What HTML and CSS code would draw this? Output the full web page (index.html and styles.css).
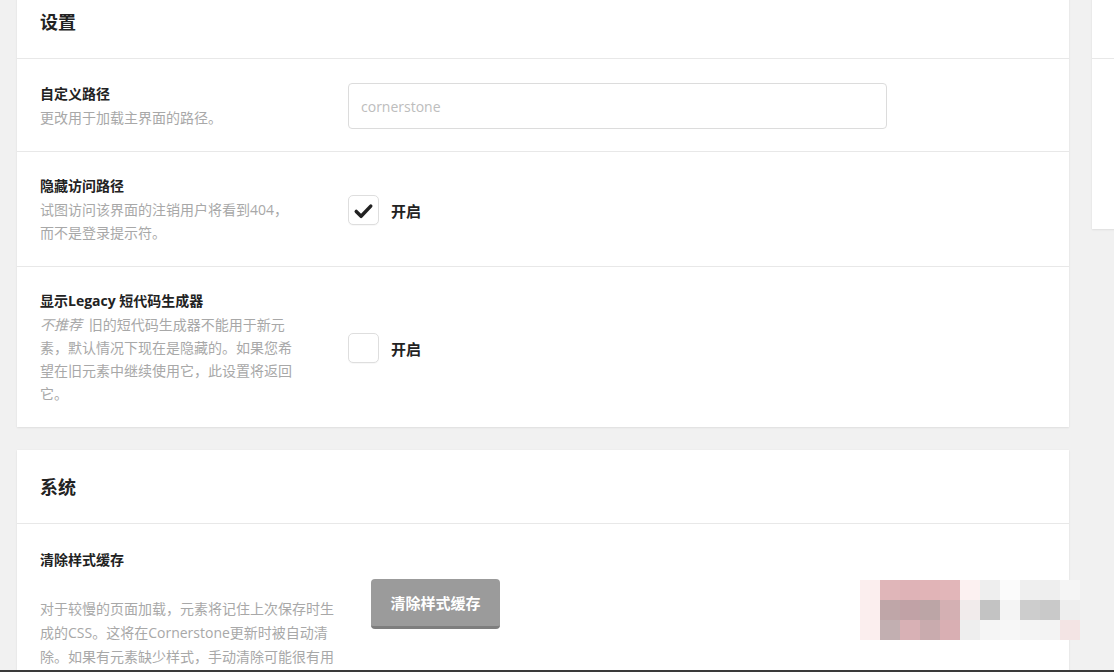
FILE: index.html
```html
<!DOCTYPE html>
<html lang="zh-CN">
<head>
<meta charset="utf-8">
<title>设置</title>
<link rel="stylesheet" href="styles.css">
</head>
<body>
<div class="viewport">
  <div class="layout">
    <main class="main">
      <section class="card">
        <header class="card-head"><h2>设置</h2></header>
        <div class="row">
          <div class="label">
            <h3>自定义路径</h3>
            <p>更改用于加载主界面的路径。</p>
          </div>
          <div class="control">
            <input class="text-input" type="text" placeholder="cornerstone">
          </div>
        </div>
        <div class="row">
          <div class="label">
            <h3>隐藏访问路径</h3>
            <p>试图访问该界面的注销用户将看到404，而不是登录提示符。</p>
          </div>
          <div class="control">
            <label class="toggle">
              <span class="box">
                <svg viewBox="0 0 30 30" width="30" height="30"><path d="M7.5 16.5 L12.5 21.5 L22.5 11" fill="none" stroke="#222" stroke-width="3.6" stroke-linecap="round" stroke-linejoin="round"/></svg>
              </span>
              <span class="toggle-text">开启</span>
            </label>
          </div>
        </div>
        <div class="row">
          <div class="label">
            <h3>显示Legacy 短代码生成器</h3>
            <p><em>不推荐</em> 旧的短代码生成器不能用于新元素，默认情况下现在是隐藏的。如果您希望在旧元素中继续使用它，此设置将返回它。</p>
          </div>
          <div class="control">
            <label class="toggle">
              <span class="box"></span>
              <span class="toggle-text">开启</span>
            </label>
          </div>
        </div>
      </section>

      <section class="card">
        <header class="card-head"><h2>系统</h2></header>
        <div class="sys-row">
          <div class="sys-label">
            <h3>清除样式缓存</h3>
            <p>对于较慢的页面加载，元素将记住上次保存时生成的CSS。这将在Cornerstone更新时被自动清除。如果有元素缺少样式，手动清除可能很有用。</p>
          </div>
          <button class="btn" type="button">清除样式缓存</button>
        </div>
      </section>
    </main>
    <aside class="side">
      <div class="side-card">
        <div class="side-head"></div>
        <div class="side-body"></div>
      </div>
    </aside>
  </div>
  <div class="mosaic" aria-hidden="true">
    <span></span><span></span><span></span><span></span><span></span><span></span><span></span><span></span><span></span><span></span><span></span>
    <span></span><span></span><span></span><span></span><span></span><span></span><span></span><span></span><span></span><span></span><span></span>
    <span></span><span></span><span></span><span></span><span></span><span></span><span></span><span></span><span></span><span></span><span></span>
  </div>
</div>
</body>
</html>
```

FILE: styles.css
```css
* { box-sizing: border-box; }

html, body {
  margin: 0;
  padding: 0;
  background: #f1f1f1;
}

body {
  font-family: "Open Sans", "Noto Sans CJK SC", sans-serif;
  color: #222;
}

.viewport {
  position: relative;
  width: 1114px;
  height: 672px;
  overflow: hidden;
  background: #f1f1f1;
  border-bottom: 2px solid #3a3a3a;
}

.layout {
  display: flex;
  gap: 23px;
  padding-left: 17px;
  margin-top: -15px;
}

.main {
  width: 1052px;
  flex-shrink: 0;
  display: flex;
  flex-direction: column;
  gap: 23px;
}

.card {
  background: #fff;
  box-shadow: 0 1px 2px rgba(0, 0, 0, 0.07), 0 0 1px rgba(0, 0, 0, 0.06);
}

.card-head {
  height: 74px;
  padding: 0 23px;
  display: flex;
  align-items: center;
  border-bottom: 1px solid #e8e8e8;
}

.card-head h2 {
  margin: 0;
  font-size: 18px;
  line-height: 24px;
  font-weight: 700;
  color: #222;
}

.row {
  display: grid;
  grid-template-columns: 308px 1fr;
  align-items: center;
  padding: 24px 23px 22px 23px;
  border-bottom: 1px solid #e8e8e8;
}

.row:last-child { border-bottom: 0; }

.label h3,
.sys-label h3 {
  margin: 0;
  font-size: 14px;
  line-height: 20px;
  font-weight: 700;
  color: #222;
}

.label p {
  margin: 2px 0 0;
  width: 254px;
  font-size: 14px;
  line-height: 23px;
  color: #a8a8a8;
}

.label em {
  font-style: italic;
  padding-right: 3px;
  color: #a8a8a8;
}

.text-input {
  display: block;
  width: 539px;
  height: 46px;
  padding: 0 12px;
  border: 1px solid #dcdcdc;
  border-radius: 4px;
  background: #fff;
  font-family: "Open Sans", "Noto Sans CJK SC", sans-serif;
  font-size: 14px;
  color: #333;
  outline: none;
}

.text-input::placeholder { color: #bdbdbd; }

.toggle {
  display: flex;
  align-items: center;
  gap: 12px;
}

.box {
  width: 31px;
  height: 30px;
  border: 1px solid #dedede;
  border-radius: 5px;
  background: #fff;
  display: flex;
  align-items: center;
  justify-content: center;
  box-shadow: 0 1px 1px rgba(0, 0, 0, 0.03);
}

.box svg { display: block; }

.toggle-text {
  font-size: 15px;
  font-weight: 700;
  color: #222;
}

.sys-row {
  display: flex;
  align-items: flex-start;
  gap: 31px;
  padding: 26px 23px 30px;
}

.sys-label { width: 300px; }

.sys-label p {
  margin: 27px 0 0;
  width: 300px;
  font-size: 14px;
  line-height: 24px;
  line-break: anywhere;
  color: #a8a8a8;
}

.btn {
  margin-top: 29px;
  width: 129px;
  height: 50px;
  border: 0;
  border-bottom: 3px solid #7e7e7e;
  border-radius: 4px;
  background: #9b9b9b;
  color: #fff;
  font-family: "Noto Sans CJK SC", sans-serif;
  font-size: 15px;
  font-weight: 700;
  padding: 0;
}

.side {
  width: 300px;
  flex-shrink: 0;
}

.side-card {
  background: #fff;
  height: 244px;
  box-shadow: 0 1px 2px rgba(0, 0, 0, 0.07), 0 0 1px rgba(0, 0, 0, 0.06);
}

.side-head {
  height: 74px;
  border-bottom: 1px solid #e8e8e8;
}

.mosaic {
  position: absolute;
  left: 860px;
  top: 580px;
  display: grid;
  grid-template-columns: repeat(11, 20px);
  grid-auto-rows: 20px;
  filter: blur(0.6px);
}

.mosaic span { display: block; }

.mosaic span:nth-child(1),
.mosaic span:nth-child(12),
.mosaic span:nth-child(23) { background: #fbeeee; }
.mosaic span:nth-child(2) { background: #e0b6b9; }
.mosaic span:nth-child(3) { background: #dfb3b7; }
.mosaic span:nth-child(4) { background: #e1b4b7; }
.mosaic span:nth-child(5) { background: #e2b6b9; }
.mosaic span:nth-child(6) { background: #fcf1f1; }
.mosaic span:nth-child(7) { background: #eeeeee; }
.mosaic span:nth-child(8) { background: #fbfbfb; }
.mosaic span:nth-child(9) { background: #efefef; }
.mosaic span:nth-child(10) { background: #eeeeee; }
.mosaic span:nth-child(11) { background: #f5f5f5; }
.mosaic span:nth-child(13) { background: #bfa6a8; }
.mosaic span:nth-child(14) { background: #c1a2a6; }
.mosaic span:nth-child(15) { background: #bca5a6; }
.mosaic span:nth-child(16) { background: #d4b0b3; }
.mosaic span:nth-child(17) { background: #f1ebeb; }
.mosaic span:nth-child(18) { background: #c3c3c3; }
.mosaic span:nth-child(19) { background: #f4f4f4; }
.mosaic span:nth-child(20) { background: #cdcdcd; }
.mosaic span:nth-child(21) { background: #c9c9c9; }
.mosaic span:nth-child(22) { background: #eeeeee; }
.mosaic span:nth-child(24) { background: #c2afb1; }
.mosaic span:nth-child(25) { background: #d8b1b5; }
.mosaic span:nth-child(26) { background: #c9abae; }
.mosaic span:nth-child(27) { background: #d9afb3; }
.mosaic span:nth-child(28) { background: #eeeeee; }
.mosaic span:nth-child(29) { background: #f5f5f5; }
.mosaic span:nth-child(30) { background: #f7f7f7; }
.mosaic span:nth-child(31) { background: #f4f4f4; }
.mosaic span:nth-child(32) { background: #f3f3f3; }
.mosaic span:nth-child(33) { background: #f3e4e4; }
```
